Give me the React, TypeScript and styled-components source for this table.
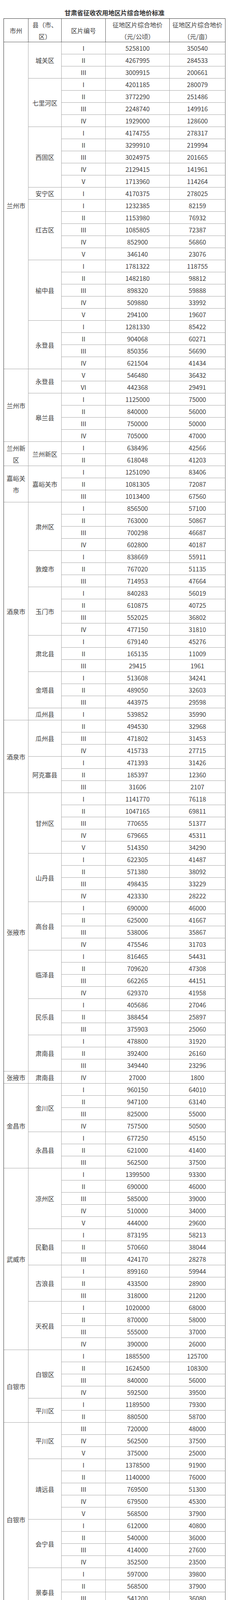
import React from 'react';
import styled, { createGlobalStyle, css } from 'styled-components';

const GlobalStyle = createGlobalStyle`
  html, body { margin: 0; padding: 0; background: #ffffff; }
  body {
    font-family: "Noto Sans CJK SC", sans-serif;
    color: #3e3e3e;
    font-size: 16px;
    line-height: 30px;
  }
`;

const Page = styled.div`
  padding: 17px 9px 0 9px;
`;

const Title = styled.h1`
  margin: 0;
  height: 30px;
  font-size: 16px;
  line-height: 30px;
  font-weight: 700;
  text-align: center;
  color: #333333;
`;

const Grid = styled.div`
  display: grid;
  width: 569px;
  box-sizing: border-box;
  grid-template-columns: 63px 85px 113px 164px 143px;
  grid-template-rows: 60px;
  grid-auto-rows: 31px;
  border-top: 1px solid #333333;
  border-left: 1px solid #333333;
`;

const cellBase = css`
  box-sizing: border-box;
  display: flex;
  align-items: center;
  justify-content: center;
  text-align: center;
  padding: 0 4px;
  font-size: 16px;
  line-height: 30px;
  border-right: 1px solid #a6a6a6;
  border-bottom: 1px solid #a6a6a6;
  min-width: 0;
`;

const HeadCell = styled.div<{ $last?: boolean }>`
  ${cellBase};
  flex-direction: column;
  border-right-color: ${(p) => (p.$last ? '#444444' : '#555555')};
  border-bottom-color: #555555;
  white-space: nowrap;
`;

const CityCell = styled.div`
  ${cellBase};
  grid-column: 1;
`;

const CountyCell = styled.div`
  ${cellBase};
  grid-column: 2;
`;

const NumCell = styled.div`
  ${cellBase};
  grid-column: 3;
  white-space: nowrap;
`;

const ValueCell = styled.div<{ $col: number }>`
  ${cellBase};
  grid-column: ${(p) => p.$col};
  white-space: nowrap;
  ${(p) => (p.$col === 5 ? 'border-right-color: #555555;' : '')}
`;

const NUM = ['', 'Ⅰ', 'Ⅱ', 'Ⅲ', 'Ⅳ', 'Ⅴ', 'Ⅵ'];

type County = [string, number, [number, number][]];
type Group = { city: string; counties: County[] };

const DATA: Group[] = [
  {
    city: '兰州市',
    counties: [
      ['城关区', 1, [[5258100, 350540], [4267995, 284533], [3009915, 200661]]],
      ['七里河区', 1, [[4201185, 280079], [3772290, 251486], [2248740, 149916], [1929000, 128600]]],
      ['西固区', 1, [[4174755, 278317], [3299910, 219994], [3024975, 201665], [2129415, 141961], [1713960, 114264]]],
      ['安宁区', 1, [[4170375, 278025]]],
      ['红古区', 1, [[1232385, 82159], [1153980, 76932], [1085805, 72387], [852900, 56860], [346140, 23076]]],
      ['榆中县', 1, [[1781322, 118755], [1482180, 98812], [898320, 59888], [509880, 33992], [294100, 19607]]],
      ['永登县', 1, [[1281330, 85422], [904068, 60271], [850356, 56690], [621504, 41434]]],
    ],
  },
  {
    city: '兰州市',
    counties: [
      ['永登县', 5, [[546480, 36432], [442368, 29491]]],
      ['皋兰县', 1, [[1125000, 75000], [840000, 56000], [750000, 50000], [705000, 47000]]],
    ],
  },
  {
    city: '兰州新区',
    counties: [['兰州新区', 1, [[638496, 42566], [618048, 41203]]]],
  },
  {
    city: '嘉峪关市',
    counties: [['嘉峪关市', 1, [[1251090, 83406], [1081305, 72087], [1013400, 67560]]]],
  },
  {
    city: '酒泉市',
    counties: [
      ['肃州区', 1, [[856500, 57100], [763000, 50867], [700298, 46687], [602800, 40187]]],
      ['敦煌市', 1, [[838669, 55911], [767020, 51135], [714953, 47664]]],
      ['玉门市', 1, [[840283, 56019], [610875, 40725], [552025, 36802], [477150, 31810]]],
      ['肃北县', 1, [[679140, 45276], [165135, 11009], [29415, 1961]]],
      ['金塔县', 1, [[513608, 34241], [489050, 32603], [443975, 29598]]],
      ['瓜州县', 1, [[539852, 35990]]],
    ],
  },
  {
    city: '酒泉市',
    counties: [
      ['瓜州县', 2, [[494530, 32968], [471802, 31453], [415733, 27715]]],
      ['阿克塞县', 1, [[471393, 31426], [185397, 12360], [31606, 2107]]],
    ],
  },
  {
    city: '张掖市',
    counties: [
      ['甘州区', 1, [[1141770, 76118], [1047165, 69811], [770655, 51377], [679665, 45311], [514350, 34290]]],
      ['山丹县', 1, [[622305, 41487], [571380, 38092], [498435, 33229], [423330, 28222]]],
      ['高台县', 1, [[690000, 46000], [625000, 41667], [538006, 35867], [475546, 31703]]],
      ['临泽县', 1, [[816465, 54431], [709620, 47308], [662265, 44151], [629370, 41958]]],
      ['民乐县', 1, [[405686, 27046], [388454, 25897], [375903, 25060]]],
      ['肃南县', 1, [[478800, 31920], [392400, 26160], [349440, 23296]]],
    ],
  },
  {
    city: '张掖市',
    counties: [['肃南县', 4, [[27000, 1800]]]],
  },
  {
    city: '金昌市',
    counties: [
      ['金川区', 1, [[960150, 64010], [947100, 63140], [825000, 55000], [757500, 50500]]],
      ['永昌县', 1, [[677250, 45150], [621000, 41400], [562500, 37500]]],
    ],
  },
  {
    city: '武威市',
    counties: [
      ['凉州区', 1, [[1399500, 93300], [690000, 46000], [585000, 39000], [510000, 34000], [444000, 29600]]],
      ['民勤县', 1, [[873195, 58213], [570660, 38044], [424170, 28278]]],
      ['古浪县', 1, [[899160, 59944], [433500, 28900], [318000, 21200]]],
      ['天祝县', 1, [[1020000, 68000], [870000, 58000], [555000, 37000], [390000, 26000]]],
    ],
  },
  {
    city: '白银市',
    counties: [
      ['白银区', 1, [[1885500, 125700], [1624500, 108300], [840000, 56000], [592500, 39500]]],
      ['平川区', 1, [[1189500, 79300], [880500, 58700]]],
    ],
  },
  {
    city: '白银市',
    counties: [
      ['平川区', 3, [[720000, 48000], [562500, 37500], [375000, 25000]]],
      ['靖远县', 1, [[1378500, 91900], [1140000, 76000], [769500, 51300], [679500, 45300], [568500, 37900]]],
      ['会宁县', 1, [[612000, 40800], [540000, 36000], [414000, 27600], [352500, 23500]]],
      ['景泰县', 1, [[597000, 39800], [568500, 37900], [541200, 36080], [465000, 31000]]],
    ],
  },
  {
    city: '定西市',
    counties: [
      ['安定区', 1, [[815000, 54333], [749900, 49993], [481275, 32085], [403800, 26920]]],
      ['安定区', 5, [[343800, 22920], [303500, 20233]]],
      ['通渭县', 1, [[627600, 41840], [508900, 33926], [359300, 23953]]],
      ['陇西县', 1, [[870000, 58000], [765000, 51000], [615000, 41000], [480000, 32000]]],
    ],
  },
  {
    city: '定西市',
    counties: [
      ['陇西县', 5, [[367500, 24500]]],
      ['渭源县', 1, [[633300, 42220], [543750, 36250], [331560, 22104]]],
      ['临洮县', 1, [[876818, 58455], [734850, 48990], [499440, 33296], [426270, 28418]]],
      ['漳县', 1, [[685350, 45690], [485160, 32344], [331395, 22093]]],
      ['岷县', 1, [[744960, 49664], [504165, 33611], [313275, 20885]]],
    ],
  },
];

function renderCells() {
  const cells: React.ReactNode[] = [];
  let row = 2; // first grid line after the header row
  DATA.forEach((g, gi) => {
    const total = g.counties.reduce((s, c) => s + c[2].length, 0);
    cells.push(
      <CityCell key={`c${gi}`} style={{ gridRow: `${row} / span ${total}` }}>
        {g.city}
      </CityCell>
    );
    g.counties.forEach((c, ci) => {
      const [name, start, vals] = c;
      cells.push(
        <CountyCell key={`k${gi}-${ci}`} style={{ gridRow: `${row} / span ${vals.length}` }}>
          {name}
        </CountyCell>
      );
      vals.forEach((v, ri) => {
        const r = row + ri;
        cells.push(
          <NumCell key={`n${gi}-${ci}-${ri}`} style={{ gridRow: `${r}` }}>
            {NUM[start + ri]}
          </NumCell>,
          <ValueCell key={`h${gi}-${ci}-${ri}`} $col={4} style={{ gridRow: `${r}` }}>
            {v[0]}
          </ValueCell>,
          <ValueCell key={`m${gi}-${ci}-${ri}`} $col={5} style={{ gridRow: `${r}` }}>
            {v[1]}
          </ValueCell>
        );
      });
      row += vals.length;
    });
  });
  return cells;
}

export default function App() {
  return (
    <>
      <GlobalStyle />
      <Page>
        <Title>甘肃省征收农用地区片综合地价标准</Title>
        <Grid>
          <HeadCell>
            <span>市州</span>
          </HeadCell>
          <HeadCell>
            <span>县（市、</span>
            <span>区）</span>
          </HeadCell>
          <HeadCell>
            <span>区片编号</span>
          </HeadCell>
          <HeadCell>
            <span>征地区片综合地价</span>
            <span>（元/公顷）</span>
          </HeadCell>
          <HeadCell $last>
            <span>征地区片综合地价</span>
            <span>（元/亩）</span>
          </HeadCell>
          {renderCells()}
        </Grid>
      </Page>
    </>
  );
}
